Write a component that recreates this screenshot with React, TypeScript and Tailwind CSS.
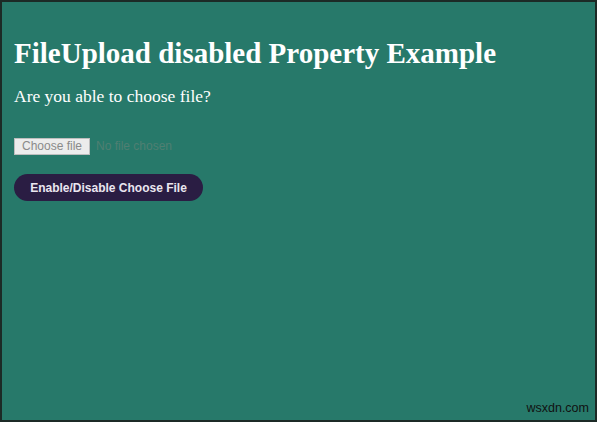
export default function App() {
  return (
    <div className="w-[600px] h-[425px] bg-white">
      <div className="relative w-[597px] h-[422px] border-2 border-[#1c2a26] bg-[#27796a] px-[12px] pt-[30px] font-['Liberation_Serif',serif] text-white">
        <h1 className="text-[29px] font-bold leading-[42px]">FileUpload disabled Property Example</h1>
        <p className="mt-[10px] text-[17.5px] leading-[24px]">Are you able to choose file?</p>
        <div className="mt-[29px] flex items-center gap-[6px] font-['Liberation_Sans',sans-serif] text-[12px]">
          <span className="flex h-[17px] w-[76px] items-center justify-center border border-[#bdbdbd] bg-[#ececec] text-[#8a8a8a]">
            Choose file
          </span>
          <span className="text-[#4f7f72]">No file chosen</span>
        </div>
        <button className="mt-[19px] h-[27px] w-[189px] rounded-full bg-[#2a1d43] font-['Liberation_Sans',sans-serif] text-[12px] font-bold text-[#eae6f0]">
          Enable/Disable Choose File
        </button>
        <span className="absolute bottom-[2px] right-[6px] font-['Liberation_Sans',sans-serif] text-[12.5px] text-[#111]">
          wsxdn.com
        </span>
      </div>
    </div>
  )
}
